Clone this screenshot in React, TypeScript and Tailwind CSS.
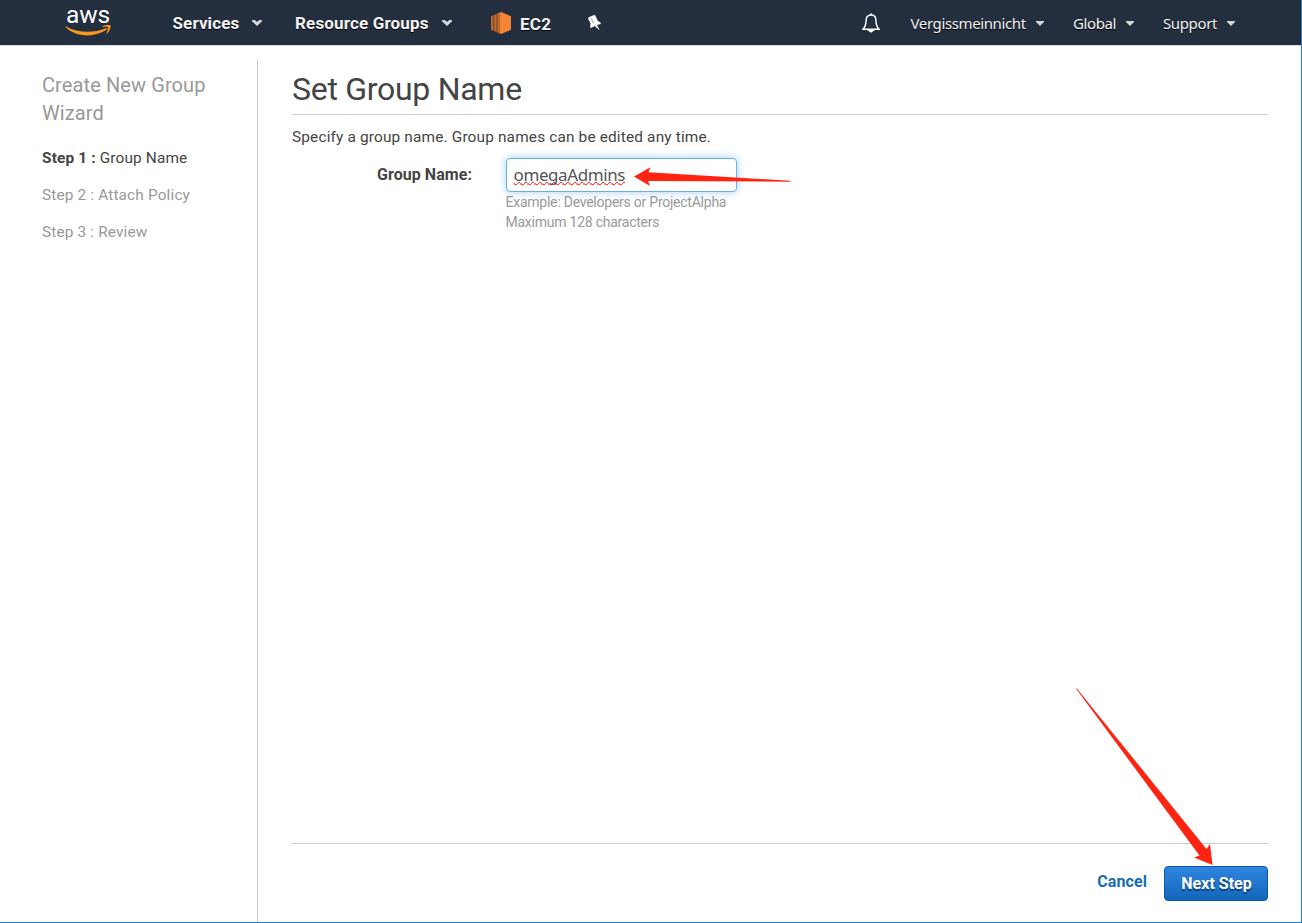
import React from "react";

function Chevron() {
  return (
    <svg width="10" height="6" viewBox="0 0 10 6" className="shrink-0">
      <path d="M0 0H2.8L5 2.1L7.2 0H10V1.2L5 6L0 1.2Z" fill="#d5d7d9" />
    </svg>
  );
}

function Caret() {
  return (
    <svg width="8" height="5" viewBox="0 0 8 5" className="shrink-0">
      <path d="M0 0H8V1L4 5L0 1Z" fill="#d3d4d3" />
    </svg>
  );
}

function TopBar() {
  return (
    <header className="flex h-[45px] shrink-0 items-start bg-[#232f3e] text-[#f2f2f2] [text-shadow:0_1px_0_#000]">
      <div className="ml-[65px] flex w-[46px] flex-col items-center [text-shadow:none]">
        <span className="h-[25px] pt-[1px] text-[24.5px] font-normal leading-[28px] tracking-[-0.1px] text-white">
          aws
        </span>
        <svg width="48" height="12" viewBox="0 0 48 12">
          <path d="M1.5 2.1C1 1.7 1.5 1 2.2 1.4C14 8.1 29 8.4 42 3.3C43.2 2.8 43.8 3.9 42.9 4.6C31 13 11 12.5 1.5 2.1Z" fill="#f7981d" />
          <path d="M38.5 1.2C41.5-.4 46-.5 46.5.5C47 2 45.8 6.4 43.1 8.6C42.6 9 42.2 8.7 42.5 8.1C43.4 5.9 44.5 3 43.9 2.3C43.4 1.6 41 1.8 39 2C38.2 2 38 1.5 38.5 1.2Z" fill="#f7981d" />
        </svg>
      </div>
      <div className="ml-[61.5px] flex h-[46px] items-center text-[17px] font-bold">
        <div className="flex w-[122.5px] items-center">
          <span className="w-[79px] pt-[1px] tracking-[0.12px]">Services</span>
          <Chevron />
        </div>
        <div className="flex w-[196px] items-center">
          <span className="w-[147px] whitespace-nowrap pt-[1px] tracking-[0.16px]">Resource Groups</span>
          <Chevron />
        </div>
        <svg width="20" height="22" viewBox="0 0 20 22">
          <path d="M0 4.2L2.5 3V19L0 17.8Z" fill="#b9642b" />
          <path d="M3.2 3L5.8 1.8V20.2L3.2 19Z" fill="#c66a2b" />
          <path d="M6.3 1.5L10 0V22L6.3 20.5Z" fill="#c66a2b" />
          <path d="M2.5 4V18M5.9 3V19" stroke="#8e5132" strokeWidth=".8" />
          <path d="M9.3.1L10 0L20 4.2V17.8L10 22L9.3 21.8Z" fill="#f68536" />
        </svg>
        <span className="ml-[9px] mt-[3px] w-[67px] tracking-[0.3px]">EC2</span>
        <svg width="15" height="16" viewBox="0 0 15 16" fill="white">
          <path d="M5.8.5L8.1 0L10.8 5.8L13.7 7.8L13.8 9L9.9 10L12.5 14.5L12.1 14.7L7.7 11.1L4.1 13L3.1 12.3L3.6 8.5L1 3.4L1.8 2.3Z" />
          <path d="M4.2 3.5L6.6 8.2" stroke="#748091" strokeWidth=".8" />
        </svg>
      </div>
      <div className="ml-auto flex h-[46px] items-center pr-[66px] font-['Noto_Sans',sans-serif] text-[15px] tracking-[-0.38px]">
        <svg width="18" height="20" viewBox="0 0 18 20" fill="none" stroke="white" strokeWidth="1.5" className="mr-[30.5px]">
          <path d="M9 2.1C5.7 2.1 4.1 4.2 4.1 7.3C4.1 12 3.3 13.8 1 16.3H17C14.7 13.8 13.9 12 13.9 7.3C13.9 4.2 12.3 2.1 9 2.1Z" />
          <path d="M8 1.1H10M7 17.7H11L9 19Z" strokeWidth="1.2" />
        </svg>
        <div className="flex w-[162.5px] items-center">
          <span className="w-[125px]">Vergissmeinnicht</span><Caret />
        </div>
        <div className="flex w-[90px] items-center">
          <span className="w-[53px]">Global</span><Caret />
        </div>
        <div className="flex items-center">
          <span className="w-[64px]">Support</span><Caret />
        </div>
      </div>
    </header>
  );
}

function Sidebar() {
  return (
    <aside className="mt-[14px] w-[258px] shrink-0 border-r border-[#ccc] pl-[42px] pt-[11px] text-[#999]">
      <h2 className="w-[190px] text-[20px] leading-[28px] tracking-[0.1px]">Create New Group Wizard</h2>
      <ol className="mt-[21px] flex flex-col gap-[17px] text-[15.4px] leading-[20px] tracking-[0.15px]">
        <li className="text-[#444]"><b>Step 1 :</b> Group Name</li>
        <li>Step 2 : Attach Policy</li>
        <li>Step 3 : Review</li>
      </ol>
    </aside>
  );
}

function GroupForm() {
  return (
    <div className="mt-[11px] flex">
      <label className="w-[180px] pt-[7px] text-right text-[16px] font-bold leading-[20px] tracking-[0.06px]">Group Name:</label>
      <div className="ml-[33.5px]">
        <div className="relative flex h-[34px] w-[231px] items-center rounded-[4px] border border-[#66afe9] bg-white px-[7px] font-['Noto_Sans',sans-serif] text-[17px] tracking-[-0.4px] text-[#555] shadow-[0_0_8px_rgba(102,175,233,0.6)]">
          <span className="underline decoration-[#f00] decoration-wavy decoration-[1px] underline-offset-[0px] [text-decoration-skip-ink:none]">omegaAdmins</span>
          <svg width="158" height="22" viewBox="0 0 158 22" className="absolute left-[127px] top-[7px]">
            <path d="M0 10.5L16.5 1.3L14.5 6.3L156 14.7V15.7L14 15L16 20Z" fill="#ff2312" />
          </svg>
        </div>
        <p className="text-[14px] leading-[20px] tracking-[-0.24px] text-[#999]">
          Example: Developers or ProjectAlpha<br />Maximum 128 characters
        </p>
      </div>
    </div>
  );
}

function Footer() {
  return (
    <footer className="relative mt-auto flex h-[79px] items-start justify-end border-t border-[#ccc] pt-[22px] text-[16px] font-bold">
      <a className="mr-[17px] mt-[4px] leading-[24px] tracking-[0.1px] text-[#146eb4]">Cancel</a>
      <button className="h-[35px] w-[104px] rounded-[4px] border border-[#0f55a5] bg-linear-to-b from-[#2f86df] to-[#1166bb] pl-[1px] font-bold text-white [text-shadow:0_2px_1px_#123f75]">
        Next Step
      </button>
      <svg width="140" height="180" viewBox="0 0 140 180" className="absolute right-[54px] top-[-157px]">
        <path d="M1.5 1L3 1.8L132.5 162L136 157L138.5 178L120 170.5L125.5 168.5Z" fill="#ff2312" />
      </svg>
    </footer>
  );
}

export default function App() {
  return (
    <div className="flex h-[923px] w-[1302px] flex-col overflow-hidden border-b border-[#207dc8] bg-white font-[Roboto,sans-serif] text-[#444]">
      <div className="flex min-h-0 flex-1 flex-col border-r border-[#207dc8]">
        <TopBar />
        <div className="flex min-h-0 flex-1 border-t border-[#ddd]">
          <Sidebar />
          <main className="ml-[34px] flex w-[976px] flex-col pt-[23px]">
            <h1 className="h-[46px] border-b border-[#ccc] text-[32px] leading-[40px] tracking-[-0.28px]">Set Group Name</h1>
            <p className="mt-[12px] text-[15.4px] leading-[20px] tracking-[0.16px]">
              Specify a group name. Group names can be edited any time.
            </p>
            <GroupForm />
            <Footer />
          </main>
        </div>
      </div>
    </div>
  );
}
